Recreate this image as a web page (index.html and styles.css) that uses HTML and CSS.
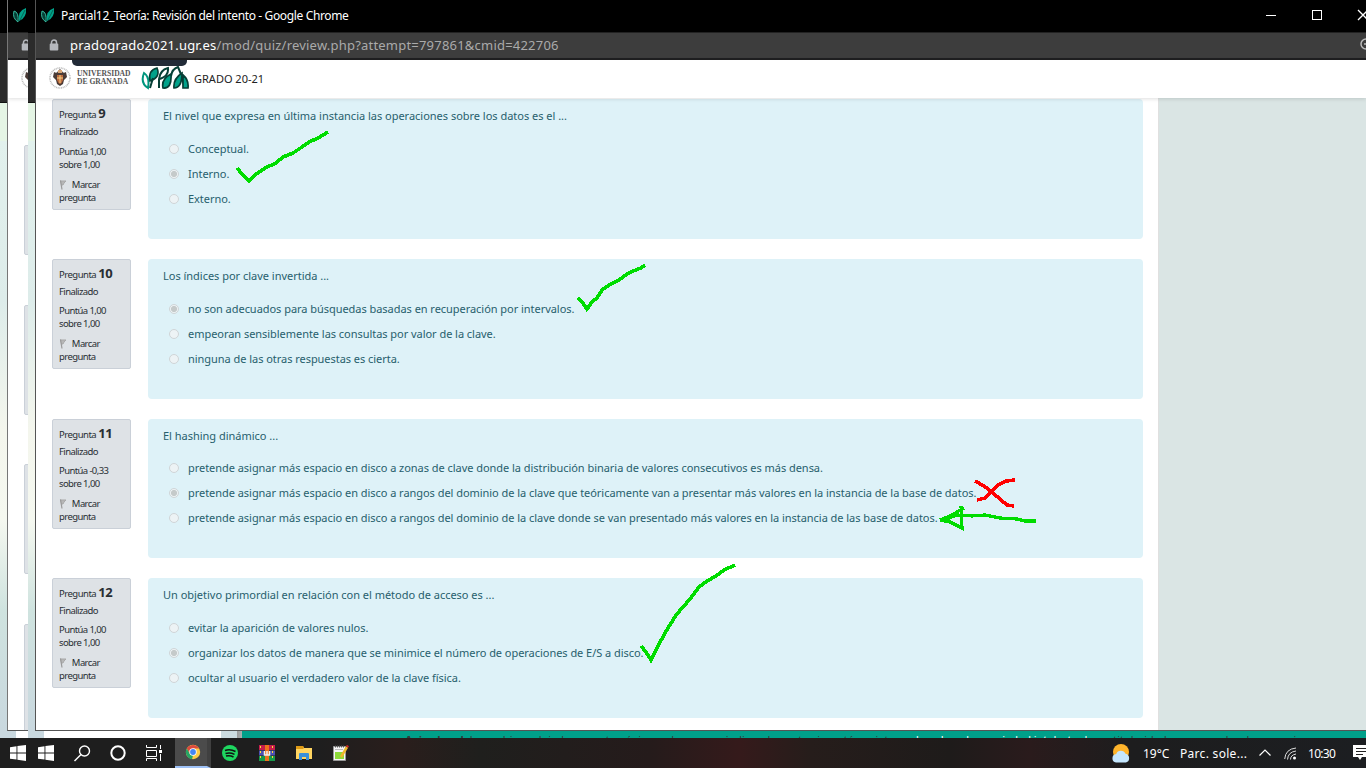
FILE: index.html
```
<!DOCTYPE html>
<html lang="es">
<head>
<meta charset="utf-8">
<title>Parcial12_Teoría: Revisión del intento</title>
<link rel="stylesheet" href="styles.css">
</head>
<body>
<svg width="0" height="0" class="defs">
  <symbol id="leaf" viewBox="0 0 14 16"><path d="M1 4Q6 5 5 15Q-1 11 1 4Z" fill="#063f36" stroke="#35b99d"/><path d="M6 14Q4 4 13 1Q14 11 6 14Z" fill="#00a28a"/><path d="M7 13L12 3" stroke="#056653"/></symbol>
  <symbol id="lock" viewBox="0 0 10 12"><path d="M2.5 5V3.5a2.5 2.5 0 0 1 5 0V5" fill="none" stroke="#b5b8bd" stroke-width="1.5"/><rect x=".7" y="4.5" width="8.6" height="7" rx="1" fill="#b5b8bd"/></symbol>
  <symbol id="seal" viewBox="0 0 22 22"><circle cx="11" cy="11" r="10" fill="#fff" stroke="#bbb" stroke-dasharray="1 .7" stroke-width="1.6"/><path d="M5 5Q8 7 9 4L11 2L13 4Q14 7 17 5L18 10L15 13L14 17L11 19L8 17L7 13L4 10Z" fill="#4a3b36"/><path d="M8 8h6v5q-1 3-3 4q-2-1-3-4z" fill="#bd6a3d"/><path d="M9 3h4v3H9z" fill="#d6a476"/><path d="M8 11h6M11 8v8" stroke="#f2cf82"/></symbol>
  <symbol id="flag" viewBox="0 0 8 10"><path d="M1 1h6L5 3l-1 2H2" fill="#b7b7b7" stroke="#a9a9a9"/><path d="M1.5 0.5L3 9.5" stroke="#999" stroke-width="1.2"/></symbol>
  <symbol id="win" viewBox="0 0 16 16"><path d="M0 2.2L6.5 1.3V7.4H0ZM7.4 1.1L16 0V7.4H7.4ZM0 8.4H6.5V14.6L0 13.8ZM7.4 8.4H16V16L7.4 14.8Z" fill="#fff"/></symbol>
</svg>
<div class="desktop">
  <div class="under"></div>
  <div class="lower"><span class="lower-page"></span><span class="lower-side"></span><span class="lower-shadow"></span><div class="legal"><p><b>Aviso legal:</b> los archivos alojados en esta página, salvo que se indique lo contrario, están sujetos a <u>derechos de propiedad intelectual</u> y su titularidad corresponde a los usuarios</p></div></div>
  <div class="window back">
    <div class="title"><svg class="leaf"><use href="#leaf"/></svg></div>
    <div class="address"><svg class="lock"><use href="#lock"/></svg></div>
    <div class="brand"><svg class="seal"><use href="#seal"/></svg></div>
    <div class="back-list"><i></i><i></i><i></i><i></i></div>
  </div>
  <div class="under second"></div>
  <div class="window main">
    <header class="title"><svg class="leaf"><use href="#leaf"/></svg><span class="title-text">Parcial12_Teoría: Revisión del intento - Google Chrome</span>
      <svg class="controls" width="110" height="30" fill="none" stroke="#fff"><path d="M10 15.5h10"/><rect x="56.5" y="10.5" width="9" height="9"/><path d="M102 10l10 10m0-10l-10 10" stroke-width="1.3"/></svg></header>
    <div class="address"><svg class="lock"><use href="#lock"/></svg><span class="url"><em>pradogrado2021.ugr.es</em>/mod/quiz/review.php?attempt=797861&amp;cmid=422706</span>
      <svg class="magnifier" width="7" height="16" fill="none" stroke="#bbb" stroke-width="1.5"><circle cx="7" cy="7" r="5"/><path d="M5 7h4"/></svg></div>
    <div class="brand"><div class="tip"></div><svg class="seal"><use href="#seal"/></svg><div class="ugr">UNIVERSIDAD<br>DE GRANADA</div>
      <svg class="prado" viewBox="0 0 48 24" width="48" height="24"><path d="M3 7Q9 11 7 22Q-1 17 3 7Z" fill="#fff" stroke="#00967e" stroke-width="2"/><path d="M9 15Q7 4 16 2Q20 11 9 15Z" fill="#00a28a" stroke="#063f36" stroke-width="1.6"/><path d="M9 22L12 12M18 22V13Q19 4 27 2Q28 10 19 13M30 10Q31 3 37 1Q42 12 43 21" fill="none" stroke="#063f36" stroke-width="2"/><path d="M30 8Q20 13 22 22Q31 23 30 8ZM41 7Q32 13 33 22Q41 22 41 7ZM42 9Q48 14 47 22H42Z" fill="#00a28a" stroke="#063f36" stroke-width="1.7"/></svg>
      <span class="course">GRADO 20-21</span></div>
    <div class="body">
      <main class="quiz">
        <section class="question"><aside class="info tall"><p class="number">Pregunta <b>9</b></p><p class="state">Finalizado</p><p class="grade">Puntúa 1,00<br>sobre 1,00</p><p class="mark"><svg><use href="#flag"/></svg> Marcar<br>pregunta</p></aside>
          <div class="content"><p class="stem">El nivel que expresa en última instancia las operaciones sobre los datos es el ...</p><div class="answers"><label><i></i><span>Conceptual.</span></label><label><i class="on"></i><span>Interno.</span></label><label><i></i><span>Externo.</span></label></div></div></section>
        <section class="question"><aside class="info"><p class="number">Pregunta <b>10</b></p><p class="state">Finalizado</p><p class="grade">Puntúa 1,00<br>sobre 1,00</p><p class="mark"><svg><use href="#flag"/></svg> Marcar<br>pregunta</p></aside>
          <div class="content"><p class="stem">Los índices por clave invertida ...</p><div class="answers"><label><i class="on"></i><span>no son adecuados para búsquedas basadas en recuperación por intervalos.</span></label><label><i></i><span>empeoran sensiblemente las consultas por valor de la clave.</span></label><label><i></i><span>ninguna de las otras respuestas es cierta.</span></label></div></div></section>
        <section class="question"><aside class="info"><p class="number">Pregunta <b>11</b></p><p class="state">Finalizado</p><p class="grade">Puntúa -0,33<br>sobre 1,00</p><p class="mark"><svg><use href="#flag"/></svg> Marcar<br>pregunta</p></aside>
          <div class="content"><p class="stem">El hashing dinámico ...</p><div class="answers"><label><i></i><span>pretende asignar más espacio en disco a zonas de clave donde la distribución binaria de valores consecutivos es más densa.</span></label><label><i class="on"></i><span>pretende asignar más espacio en disco a rangos del dominio de la clave que teóricamente van a presentar más valores en la instancia de la base de datos.</span></label><label><i></i><span>pretende asignar más espacio en disco a rangos del dominio de la clave donde se van presentado más valores en la instancia de las base de datos.</span></label></div></div></section>
        <section class="question"><aside class="info"><p class="number">Pregunta <b>12</b></p><p class="state">Finalizado</p><p class="grade">Puntúa 1,00<br>sobre 1,00</p><p class="mark"><svg><use href="#flag"/></svg> Marcar<br>pregunta</p></aside>
          <div class="content"><p class="stem">Un objetivo primordial en relación con el método de acceso es ...</p><div class="answers"><label><i></i><span>evitar la aparición de valores nulos.</span></label><label><i class="on"></i><span>organizar los datos de manera que se minimice el número de operaciones de E/S a disco.</span></label><label><i></i><span>ocultar al usuario el verdadero valor de la clave física.</span></label></div></div></section>
      </main>
      <div class="margin"></div>
    </div>
  </div>
  <svg class="ink" width="1366" height="768" fill="none" stroke="#00dc00" stroke-width="3.6" shape-rendering="crispEdges">
    <path d="M237 168L243 175L249 181L255 175L265 168L276 163L283 157L293 153L302 147L309 142L318 138L328 132"/>
    <path d="M578 298L583 303L587 309L592 302L597 298L602 290L611 284L619 280L627 274L633 271L641 268L645 265"/>
    <path d="M641 646L646 652L651 660L657 648L665 633L676 615L690 599L699 587L707 581L716 576L724 570L735 565"/>
    <path stroke-width="3.2" d="M1036 521L1025 521L1017 519L1000 518L985 515L972 516L957 515L949 518L940 520L950 522L962 528L961 506M964 508L950 516L940 520"/>
    <path stroke="#f00" d="M975 481L984 486L993 493L1001 500L1007 505L1014 506M1015 480L1006 481L998 485L990 493L985 498L977 500"/>
  </svg>
  <footer class="taskbar">
    <div class="apps">
      <span class="app start"><svg width="16" height="16"><use href="#win"/></svg></span>
      <span class="app start2"><svg width="16" height="16"><use href="#win"/></svg></span>
      <span class="app search"><svg width="17" height="17" fill="none" stroke="#fff" stroke-width="1.4"><circle cx="10.5" cy="6" r="5"/><path d="M7 9.5L.5 16"/></svg></span>
      <span class="app cortana"><svg width="16" height="16"><circle cx="8" cy="8" r="6.7" fill="none" stroke="#fff" stroke-width="2"/></svg></span>
      <span class="app tasks"><svg width="16" height="16" fill="none" stroke="#fff"><path d="M.5 0v2.500h10V0M.5 16v-2.500h10V16M.5 5.500h10v6H.5zM14.500 0v4M14.500 9v7"/><path d="M13 6.500h3" stroke-width="3"/></svg></span>
      <span class="app chrome"><svg width="16" height="16"><circle cx="8" cy="8" r="7.200" fill="#fc4"/><path d="M1.800 4.500A7.200 7.200 0 0 1 14.200 4.500H8L5 10Z" fill="#dc4a3e"/><path d="M1.800 4.500L5 10l3 1.500L7 15.200A7.200 7.200 0 0 1 1.800 4.500" fill="#26a565"/><circle cx="8" cy="8" r="3.700" fill="#fff"/><circle cx="8" cy="8" r="2.900" fill="#4587f3"/></svg></span>
      <span class="app"><svg width="16" height="16"><circle cx="8" cy="8" r="8" fill="#1ed760"/><path d="M3 5.500Q8 3.500 13.500 6.500M3.500 8.500Q8 7 12.500 9.300M4 11Q8 10 11.500 12" fill="none" stroke="#111" stroke-width="1.500"/></svg></span>
      <span class="app"><svg width="16" height="16"><path fill="#c41e4c" d="M0 0h16v5H0z"/><path fill="#4c50b2" d="M0 5.500h16v5H0z"/><path fill="#16984a" d="M0 11h16v5H0z"/><path fill="#ee721c" d="M6 0h4v16H6z"/><path stroke="#fd3" stroke-dasharray="2 3" d="M1.500 1v15M13.500 1v15"/><path d="M5.500 6v4h5V6M8 6v4" fill="none" stroke="#eee" stroke-width="1.500"/></svg></span>
      <span class="app"><svg width="16" height="16"><path d="M0 1h7l1 2h8v11H0z" fill="#ffd561"/><path d="M0 1h7l1 2-1 1H0z" fill="#dd9a16"/><path d="M3 15V9q0-1 1-1h8q1 0 1 1v6h-3v-3H6v3z" fill="#3990db"/></svg></span>
      <span class="app"><svg width="16" height="16"><path d="M.5 1.500h12v14H.5z" fill="#f6f6f6" stroke="#999"/><path d="M2 7h9v7H2z" fill="#8dda38"/><path d="M2 1.500h10" stroke="#555" stroke-dasharray="1 1" stroke-width="2"/><path d="M2 4.500h8" stroke="#bbb"/><path d="M8 12l6-10" stroke="#efb72b" stroke-width="2.500"/><path d="M14 2l1-1.500" stroke="#c22" stroke-width="2.500"/></svg></span>
    </div>
    <div class="tray">
      <svg class="weather" width="20" height="20"><circle cx="10" cy="9" r="8" fill="#ffb42b"/><path d="M5 19.500a4.300 4.300 0 0 1 .2-8.500 5 5 0 0 1 9.300-.2 4.500 4.500 0 0 1 .5 8.700Z" fill="#c5e7ff"/></svg>
      <span class="temp">19°C</span><span class="forecast">Parc. sole...</span>
      <svg class="up" width="12" height="8" fill="none" stroke="#fff" stroke-width="1.200"><path d="M.5 6.500L6 1l5.500 5.500"/></svg>
      <svg class="wifi" width="13" height="13" fill="none" stroke="#ddd"><path d="M.7 12Q1.500 2 12 1M3.500 12.500Q4 5 12 4M6.500 12.500Q6.500 8 12 7"/><circle cx="10.500" cy="11" r="1.500" fill="#fff" stroke="none"/></svg>
      <span class="clock">10:30</span>
      <svg class="note" width="13" height="16"><path d="M0 0h15v12H9l-2 3-2-3H0z" fill="#fff"/><path d="M3 3.500h10M3 6.500h10M3 9.500h7" stroke="#222"/></svg>
    </div>
  </footer>
</div>
</body>
</html>
```
FILE: styles.css
```
* { box-sizing: border-box; }
body { margin: 0; overflow: hidden; font-family: "Noto Sans", sans-serif; }
p { margin: 0; }
.defs { position: absolute; }
.desktop { position: relative; width: 1366px; height: 768px; overflow: hidden; background: #fff; }
.under { position: absolute; left: 0; top: 0; width: 8px; height: 738px; background: linear-gradient(#000 33px, #2b2b2b 33px 102px, #111 102px 103px, #e5f5e5 103px 141px, #e2f1ed 141px, #ddecea 300px, #f4f6ed 430px, #f5f8f0 520px, #cfe3df 610px, #c9d8df 730px); }
.second { left: 28px; }
.window { position: absolute; top: 0; height: 731px; background: #fff; border-left: 1px solid #777; border-bottom: 1px solid #555; overflow: hidden; }
.back { left: 7px; width: 21px; }
.main { left: 35px; width: 1331px; border-left-color: #555; }
.title { height: 32px; background: #000; color: #fff; display: flex; align-items: center; padding: 0 0 2px 5px; }
.leaf { width: 14px; height: 16px; flex: none; }
.title-text { margin-left: 6px; font-size: 12px; letter-spacing: -.36px; white-space: nowrap; }
.controls { margin-left: auto; flex: none; }
.address { height: 28px; background: #3d3d3d; border-bottom: 2px solid #1f1f21; border-top: 1px solid #222; display: flex; align-items: center; padding: 0 0 1px 13px; color: #aaa; }
.lock { width: 10px; height: 12px; flex: none; }
.url { margin-left: 11px; font-size: 13px; letter-spacing: .21px; white-space: nowrap; }
.url em { color: #fff; font-style: normal; }
.magnifier { margin-left: auto; }
.brand { position: relative; z-index: 1; height: 38px; background: #fff; display: flex; align-items: center; padding: 0 0 2px 13px; box-shadow: 0 1px 4px #0002; }
.tip { position: absolute; left: 36px; top: 0; width: 115px; height: 6px; background: #222b38; border-radius: 0 0 5px 5px; }
.seal { width: 22px; height: 22px; flex: none; }
.ugr { width: 54px; margin-left: 6px; font: bold 7.600px/8px "Liberation Serif", serif; color: #555; white-space: nowrap; }
.prado { margin-left: 10px; }
.course { margin-left: 5px; font-size: 11px; color: #222; }
.body { height: 632px; display: flex; }
.quiz { width: 1123px; padding: 1.400px 15px 0 16px; border-right: 1px solid #e0e0e0; display: flex; flex-direction: column; gap: 20px; }
.margin { flex: 1; background: #dae5e4; }
.question { height: 139.600px; flex: none; display: flex; gap: 17px; align-items: flex-start; }
.info { width: 79px; height: 110px; background: #dee2e6; border: 1px solid #cad0d8; padding: 6px; font-size: 9.500px; line-height: 13px; letter-spacing: -.6px; color: #282e33; border-radius: 2px; white-space: nowrap; }
.tall { height: 111px; }
.number { height: 17px; line-height: 15px; letter-spacing: -.5px; }
.number b { font-size: 13px; letter-spacing: -.4px; }
.state { height: 19px; line-height: 18px; }
.grade { height: 33px; padding-top: 2px; }
.tall .grade { height: 34px; padding-top: 3px; }
.mark { padding-top: 2px; }
.mark svg { width: 8px; height: 10px; margin-right: 3px; vertical-align: -2px; }
.content { flex: 1; height: 100%; background: #def2f8; border-radius: 4px; padding: 9px 15px; color: #27606d; font-size: 11px; line-height: 16px; letter-spacing: -.04px; white-space: nowrap; }
.stem { letter-spacing: -.015px; }
.answers { margin-top: 12.400px; padding-left: 6px; }
.answers label { height: 25px; display: flex; align-items: center; gap: 9px; }
.answers i { width: 10px; height: 10px; flex: none; border: 1px solid #d0d5d7; border-radius: 50%; background: #edf3f5; }
.answers .on { background: radial-gradient(circle, #c5caca 0 2.700px, #edf3f5 3.400px); }
.back-list { padding: 47px 0 0 16px; display: flex; flex-direction: column; gap: 49.500px; }
.back-list i { width: 79px; height: 110px; flex: none; background: #dee2e6; border: 1px solid #cad0d8; border-radius: 2px; }
.lower { position: absolute; top: 731px; height: 7px; left: 0; right: 0; display: flex; background: linear-gradient(90deg, #c9d8df 16px, #fff 16px 28px, #c9d8df 28px 44px, #fff 44px); }
.lower-page { width: 221px; }
.lower-side { width: 16px; background: #cbdbe0; }
.lower-shadow { width: 5px; background: linear-gradient(90deg, #999, #aab1b1); }
.legal { flex: 1; background: #00a08a; overflow: hidden; padding: 3px 0 0 163px; color: #333b3b; font-size: 11px; line-height: 11px; letter-spacing: -.03px; white-space: nowrap; }
.legal u { color: #fff; text-decoration: none; }
.ink { position: absolute; left: 0; top: 0; }
.taskbar { position: absolute; left: 0; right: 0; bottom: 0; height: 30px; background: linear-gradient(90deg, #1e1e1e 320px, #2a1e1c 400px, #1f1f1d 480px, #251b1b 650px, #351a1b 740px, #261d1b 810px, #1e1b1a 950px, #2a1b1c 1030px, #1d1d1e 1130px, #1c1e21); display: flex; justify-content: space-between; color: #fff; }
.apps { display: flex; }
.app { width: 37px; height: 30px; display: flex; align-items: center; justify-content: center; }
.start { width: 36px; }
.start2 { width: 19px; }
.search { width: 55px; }
.cortana { width: 16px; }
.tasks { width: 47px; padding-left: 9px; }
.chrome { width: 36px; margin-left: 2px; padding-left: 4px; background: #4b4b4b; border-right: 4px solid #404040; border-bottom: 2px solid #9fc2f7; }
.tray { display: flex; align-items: center; font-size: 12px; white-space: nowrap; }
.temp { width: 27px; margin-left: 12px; }
.forecast { width: 67px; margin-left: 10px; letter-spacing: .3px; }
.up { margin-left: 12px; }
.wifi { margin-left: 13px; }
.clock { width: 27px; margin-left: 11px; letter-spacing: -.7px; }
.note { margin-left: 18px; }
```
